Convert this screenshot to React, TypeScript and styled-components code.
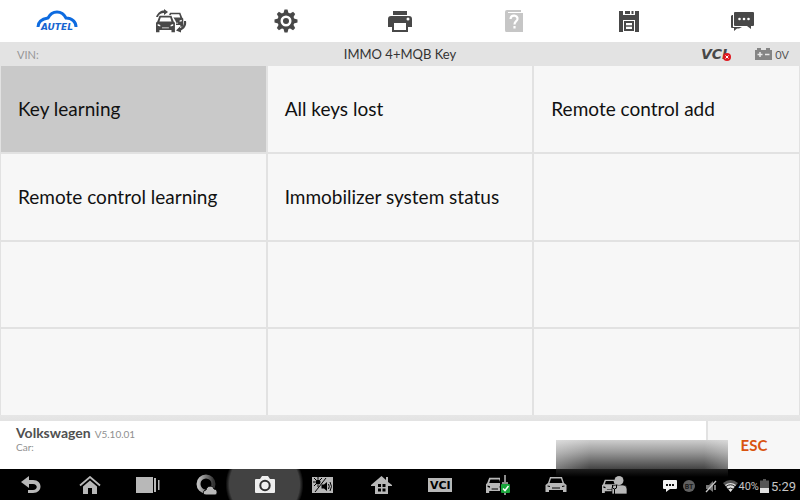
import React from 'react';
import styled, { createGlobalStyle } from 'styled-components';

const GlobalStyle = createGlobalStyle`
  * { box-sizing: border-box; }
  body { margin: 0; background: #fff; font-family: Lato, sans-serif; }
  button { font: inherit; color: inherit; border: 0; padding: 0; background: none; cursor: pointer; }
  svg { display: block; flex: none; }
`;

const Page = styled.div`
  display: flex;
  flex-direction: column;
  min-height: 100vh;
`;

const Toolbar = styled.nav`
  display: grid;
  grid-template-columns: repeat(7, 1fr);
  height: 42px;
  background: #fff;
`;

const ToolButton = styled.button<{ $muted?: boolean }>`
  display: flex;
  align-items: center;
  justify-content: center;
  color: ${(p) => (p.$muted ? '#c6c6c6' : '#484848')};
`;

const InfoBar = styled.header`
  display: grid;
  grid-template-columns: 1fr auto 1fr;
  align-items: center;
  height: 24px;
  padding: 0 11px;
  background: #e3e3e3;
`;

const Vin = styled.span`
  padding-left: 6px;
  font-size: 11px;
  color: #969696;
`;

const Title = styled.h1`
  margin: 0;
  font-size: 13px;
  line-height: 24px;
  font-weight: 400;
  color: #333;
`;

const InfoStatus = styled.div`
  display: flex;
  align-items: center;
  justify-content: flex-end;
  gap: 3px;
  font-size: 11px;
  color: #555;
`;

const VciStatus = styled.span`
  display: flex;
  margin-right: 20px;
`;

const MenuGrid = styled.main`
  flex: 1;
  display: grid;
  grid-template-columns: repeat(3, 1fr);
  grid-template-rows: repeat(4, minmax(64px, 1fr));
  gap: 2px;
  padding: 0 1px;
  background: #e2e2e2;
`;

const MenuButton = styled.button<{ $selected?: boolean }>`
  padding: 0 17px;
  text-align: left;
  font-size: 19px;
  line-height: 24px;
  color: #111;
  background: ${(p) => (p.$selected ? '#c9c9c9' : '#f7f7f7')};
`;

const EmptyCell = styled.div`
  background: #f7f7f7;
`;

const Footer = styled.footer`
  position: relative;
  z-index: 1;
  display: flex;
  justify-content: space-between;
  height: 54px;
  border-style: solid;
  border-width: 6px 0 0;
  border-image: linear-gradient(#e6e6e6, #c8c8c8) 6;
  background: #fff;
`;

const Vehicle = styled.div`
  padding: 4px 16px;
  font-size: 10px;
  line-height: 10px;
  color: #8f8f8f;
`;

const VehicleLine = styled.div`
  display: flex;
  align-items: baseline;
  gap: 4px;
  line-height: 15px;
`;

const Make = styled.strong`
  font-size: 14px;
  color: #505050;
`;

const EscButton = styled.button`
  width: 94px;
  border-left: 2px solid #e2e2e2;
  background: #f7f7f7;
  font-size: 15px;
  font-weight: 700;
  color: #d9540f;
`;

const Shade = styled.div`
  position: absolute;
  right: 9%;
  bottom: -8px;
  width: 172px;
  height: 37px;
  pointer-events: none;
  background:
    linear-gradient(90deg, rgba(255, 255, 255, 0.3), transparent 20%, transparent 86%, rgba(255, 255, 255, 0.25)) top / 100% 29px no-repeat,
    linear-gradient(#cecece, #9a9a9a 12px, #444 29px, rgba(34, 34, 34, 0.9) 29px, transparent);
`;

const SystemBar = styled.nav`
  display: flex;
  height: 31px;
  padding: 0 4px 0 2px;
  background: #000;
  color: #b8b8b8;
`;

const SystemApps = styled.div`
  flex: 1;
  display: grid;
  grid-template-columns: repeat(11, 1fr);
`;

const AppButton = styled.button<{ $active?: boolean }>`
  display: flex;
  align-items: center;
  justify-content: center;
  margin: ${(p) => (p.$active ? '0 -9px' : '0')};
  color: ${(p) => (p.$active ? '#eeeeee' : 'inherit')};
  background: ${(p) => (p.$active ? 'radial-gradient(circle, #424242 35px, transparent 39px)' : 'none')};
`;

const Tray = styled.div`
  display: flex;
  align-items: center;
  justify-content: flex-end;
  width: 152px;
  padding-top: 3px;
  font-family: Roboto, sans-serif;
  font-size: 11px;
  color: #c5c5c5;
`;

const TrayIcon = styled.span<{ $gap?: number }>`
  margin-right: ${(p) => p.$gap ?? 0}px;
`;

const Clock = styled.time`
  margin-left: 2px;
  font-size: 13px;
`;

type IconProps = { w: number; h: number; children: React.ReactNode };
const Icon = ({ w, h, children }: IconProps) => (
  <svg width={w} height={h} viewBox={`0 0 ${w} ${h}`} fill="currentColor" aria-hidden="true">
    {children}
  </svg>
);

const carPath =
  'M4 1H18L20.5 7.5L22 9V20H18V17.5H4V20H0V9L1.5 7.5ZM5.5 3L4 7.5H18L16.5 3ZM2 10.5V12.5L5 13.3V11.5ZM20 10.5V12.5L17 13.3V11.5ZM7 14.5V15.5H15V14.5Z';

const AutelLogo = () => (
  <Icon w={44} h={24}>
    <path
      d="M3 18C3 13 7 10 13 9C17 1 27 1 31 9C37 9 41 13 41 18"
      fill="none" stroke="#0d6be0" strokeWidth="3"
    />
    <text x="6" y="21" fontFamily="DejaVu Sans" fontWeight="700" fontStyle="oblique" fontSize="9" fill="#1765d0">AUTEL</text>
  </Icon>
);

const VehicleSwapIcon = () => (
  <Icon w={32} h={24}>
    <g transform="translate(12 3) scale(.74)"><path fillRule="evenodd" d={carPath} /></g>
    <path d="M1 9L4 6H17L20 11L21 13V23H1Z" fill="#fff" />
    <g transform="translate(1 6) scale(.86)"><path fillRule="evenodd" d={carPath} /></g>
    <path d="M1 8C3 3 6 1.5 9 1.5V0L13 3L9 6V4C6 4 4 5 3 8ZM29 12H31C32 17 29 20 26 21.5V23.5L21 21.5L25 17.5V19C28 18 29 16 29 12Z" />
  </Icon>
);

const GearIcon = () => (
  <Icon w={24} h={24}>
    {[0, 45, 90, 135, 180, 225, 270, 315].map((a) => (
      <path key={a} d="M9 6L10.5 0.5H13.5L15 6Z" transform={`rotate(${a} 12 12)`} />
    ))}
    <circle cx="12" cy="12" r="7" fill="none" stroke="currentColor" strokeWidth="3" />
    <circle cx="12" cy="12" r="3" />
  </Icon>
);

const PrinterIcon = () => (
  <Icon w={24} h={22}>
    <path d="M5 1H19V5H5ZM3 6H21Q24 6 24 9V17H19V11H5V17H0V9Q0 6 3 6Z" />
    <path d="M4 11H20V22H4ZM6 13V20H18V13Z" fillRule="evenodd" />
    <circle cx="20" cy="9" r="1.5" fill="#fff" />
  </Icon>
);

const HelpIcon = () => (
  <Icon w={18} h={22}>
    <path d="M2 0H16V2H3V3H18V22H1Q0 22 0 20V2Q0 0 2 0Z" />
    <path d="M5.5 9C6 4 13 5 12.5 9C12.3 11.5 9.5 11 9.5 14.5M9.5 16V18.5" fill="none" stroke="#fff" strokeWidth="2.2" />
  </Icon>
);

const SaveIcon = () => (
  <Icon w={20} h={21}>
    <path d="M0 0H4V4H16V0H20V21H16V9H4V21H0Z" />
    <path d="M6 0H11V3H6ZM12.5 0H14.5V3H12.5Z" />
    <path fillRule="evenodd" d="M5 10H15V20H5ZM7 12V18H13V12Z" />
    <path d="M7 14.3H13V15.7H7Z" />
  </Icon>
);

const MessageIcon = () => (
  <Icon w={23} h={20}>
    <path d="M4 1H22Q23 1 23 2V14Q23 15 22 15H20V18L16 15H4Q3 15 3 14V2Q3 1 4 1Z" />
    <path d="M1 4H2V16H11L8 17.5H6L3 20V17H1Q0 17 0 16V5Z" />
    <circle cx="8.5" cy="8" r="1.3" fill="#fff" />
    <circle cx="13" cy="8" r="1.3" fill="#fff" />
    <circle cx="17.5" cy="8" r="1.3" fill="#fff" />
  </Icon>
);

const VciIcon = () => (
  <Icon w={32} h={22}>
    <text x="1" y="16" fontFamily="DejaVu Sans" fontWeight="700" fontStyle="oblique" fontSize="14" fill="#484848">VCI</text>
    <circle cx="27" cy="14" r="4" fill="#df1820" />
    <path d="M25.5 12.5L28.5 15.5M28.5 12.5L25.5 15.5" stroke="#fff" />
  </Icon>
);

const CarBatteryIcon = () => (
  <Icon w={17} h={12}>
    <path d="M2 0H6V2H11V0H15V2H17V12H0V2H2Z" fill="#858585" />
    <path d="M2.5 6.5H7.5M5 4V9M10 6.5H14.5" stroke="#e8e8e8" strokeWidth="1.5" />
  </Icon>
);

const BackIcon = () => (
  <Icon w={20} h={18}>
    <path d="M8 0V4H12C22 4 22 17 12 17H7V14H12C17 14 17 8 12 8H8V12L0 6Z" />
  </Icon>
);

const HomeIcon = () => (
  <Icon w={22} h={18}>
    <path d="M1 9.5L11 1L21 9.5" fill="none" stroke="currentColor" strokeWidth="1.8" />
    <path d="M4 10.5L11 4.5L18 10.5V18H13V12H9V18H4Z" />
  </Icon>
);

const RecentIcon = () => (
  <Icon w={24} h={16}>
    <path d="M0 0H17V16H0ZM18 1H20V15H18ZM22 3H23.5V13H22Z" />
  </Icon>
);

const BrowserIcon = () => (
  <Icon w={23} h={21}>
    <defs>
      <linearGradient id="ring"><stop stopColor="#c0c0c0" /><stop offset="1" stopColor="#333" /></linearGradient>
    </defs>
    <circle cx="11" cy="10" r="7.5" fill="none" stroke="url(#ring)" strokeWidth="4" />
    <path d="M11 21C7 21 8 16 11 16C12 11 18 11 19 15C23 15 23 21 20 21Z" stroke="#000" />
  </Icon>
);

const CameraIcon = () => (
  <Icon w={20} h={17}>
    <path d="M1 3H5L7 0H13L15 3H19Q20 3 20 4V16Q20 17 19 17H1Q0 17 0 16V4Q0 3 1 3Z" />
    <circle cx="10" cy="9.5" r="4.7" fill="none" stroke="#303030" strokeWidth="2" />
  </Icon>
);

const DisplaySoundIcon = () => (
  <Icon w={21} h={16}>
    <path d="M0 0H21V16H0Z" />
    <circle cx="6" cy="5" r="2.5" fill="#000" />
    <path d="M6 0V2M1 5H3M2 1L4 3M10 1L8 3M2 9L4 7M6 8V10M14 1L3 15" stroke="#000" />
    <path d="M9.5 7.5H12L15 5V14L12 11.5H9.5Z" fill="#000" />
    <path d="M16.5 7Q18 9.5 16.5 12M18 5Q21 9.5 18 14" fill="none" stroke="#000" />
  </Icon>
);

const HouseIcon = () => (
  <Icon w={21} h={18}>
    <path d="M0 9L10.5 0L15 4V1H17V6L21 9V10H17V18H4V10H0Z" />
    <path d="M7 8H10V11H7ZM11.5 8H14.5V11H11.5ZM7 12.5H10V15.5H7ZM11.5 12.5H14.5V15.5H11.5Z" fill="#000" />
  </Icon>
);

const VciBoxIcon = () => (
  <Icon w={24} h={14}>
    <path d="M0 0H24V14H0Z" />
    <text x="2" y="11" fontFamily="DejaVu Sans" fontWeight="700" fontSize="11" fill="#000">VCI</text>
  </Icon>
);

const VehicleCheckIcon = () => (
  <Icon w={25} h={20}>
    <g transform="translate(0 2) scale(.8)"><path fillRule="evenodd" d={carPath} /></g>
    <path d="M14 0H21V20H14Z" fill="#000" />
    <path d="M18 0H20V20H18ZM16 7H22V9H16Z" fill="#8c8c8c" />
    <rect x="15" y="9" width="9" height="9" rx="1" fill="#18a43a" />
    <path d="M17 13.5L19 15.5L22.5 11" fill="none" stroke="#fff" strokeWidth="1.5" />
  </Icon>
);

const CarIcon = () => (
  <Icon w={22} h={17}>
    <path fillRule="evenodd" d="M5 1H17L19 7L21.5 9V16H18V14H4V16H0.5V9L3 7ZM6 2.5L4.5 7H17.5L16 2.5ZM2.5 9.5V10.5L5 11V10ZM19.5 9.5V10.5L17 11V10ZM7 11.5V12.5H15V11.5Z" />
  </Icon>
);

const TechnicianIcon = () => (
  <Icon w={25} h={18}>
    <g transform="translate(0 3) scale(.7)"><path fillRule="evenodd" d={carPath} /></g>
    <path d="M10 18V12Q10 9 14 9H21Q25 9 25 13V18Z" stroke="#000" strokeWidth=".7" />
    <circle cx="17" cy="4.5" r="4.5" />
    <path d="M10.5 9V12L12.5 13L14.5 12V9M12.5 13V18" fill="none" stroke="#000" strokeWidth="1" />
  </Icon>
);

const TrayMessageIcon = () => (
  <Icon w={14} h={12}>
    <path d="M1 0H13Q14 0 14 1V8Q14 9 13 9H7L3 12V9H1Q0 9 0 8V1Q0 0 1 0Z" fill="#f2f2f2" />
    <path d="M3 4H5V6H3ZM6 4H8V6H6ZM9 4H11V6H9Z" fill="#111" />
  </Icon>
);

const BluetoothIcon = () => (
  <Icon w={12} h={12}>
    <circle cx="6" cy="6" r="6" fill="#606060" />
    <text x="6" y="9" textAnchor="middle" fontFamily="Roboto" fontWeight="700" fontSize="7" fill="#1b1b1b">BT</text>
  </Icon>
);

const MutedIcon = () => (
  <Icon w={12} h={13}>
    <path d="M1 5H4L8 1V12L4 9H1Z" fill="#777" />
    <path d="M1 12L11 1M10 5V10" stroke="#c5c5c5" strokeWidth="1.3" />
  </Icon>
);

const WifiIcon = () => (
  <Icon w={15} h={12}>
    <path d="M0 3Q7.5-3 15 3L7.5 12Z" fill="#555" />
    <path d="M2 5Q7.5 1 13 5L7.5 12Z" fill="#e0e0e0" />
    <path d="M3 6.5Q7.5 3 12 6.5M5 9Q7.5 7 10 9" fill="none" stroke="#222" />
  </Icon>
);

const BatteryIcon = () => (
  <Icon w={9} h={14}>
    <path d="M3 0H6V1.5H9V14H0V1.5H3Z" fill="#555" />
    <path d="M0 9H9V14H0Z" fill="#dedede" />
  </Icon>
);

const tools = [
  { label: 'Autel home', icon: <AutelLogo /> },
  { label: 'Switch vehicle', icon: <VehicleSwapIcon /> },
  { label: 'Settings', icon: <GearIcon /> },
  { label: 'Print', icon: <PrinterIcon /> },
  { label: 'Help', icon: <HelpIcon />, muted: true },
  { label: 'Save', icon: <SaveIcon /> },
  { label: 'Messages', icon: <MessageIcon /> },
];

const functions = [
  'Key learning', 'All keys lost', 'Remote control add',
  'Remote control learning', 'Immobilizer system status', '',
  '', '', '', '', '', '',
];

const apps = [
  { label: 'Back', icon: <BackIcon /> },
  { label: 'Home', icon: <HomeIcon /> },
  { label: 'Recent apps', icon: <RecentIcon /> },
  { label: 'Browser', icon: <BrowserIcon /> },
  { label: 'Camera', icon: <CameraIcon />, active: true },
  { label: 'Display and sound', icon: <DisplaySoundIcon /> },
  { label: 'MaxiSys home', icon: <HouseIcon /> },
  { label: 'VCI', icon: <VciBoxIcon /> },
  { label: 'Diagnostics', icon: <VehicleCheckIcon /> },
  { label: 'Vehicle', icon: <CarIcon /> },
  { label: 'Service', icon: <TechnicianIcon /> },
];

export default function App() {
  return (
    <Page>
      <GlobalStyle />
      <Toolbar>
        {tools.map((t) => (
          <ToolButton key={t.label} aria-label={t.label} $muted={t.muted} disabled={t.muted}>
            {t.icon}
          </ToolButton>
        ))}
      </Toolbar>
      <InfoBar>
        <Vin>VIN:</Vin>
        <Title>IMMO 4+MQB Key</Title>
        <InfoStatus>
          <VciStatus><VciIcon /></VciStatus>
          <CarBatteryIcon />
          <span>0V</span>
        </InfoStatus>
      </InfoBar>
      <MenuGrid>
        {functions.map((name, i) =>
          name ? (
            <MenuButton key={i} $selected={i === 0}>{name}</MenuButton>
          ) : (
            <EmptyCell key={i} />
          ),
        )}
      </MenuGrid>
      <Footer>
        <Vehicle>
          <VehicleLine>
            <Make>Volkswagen</Make>
            <span>V5.10.01</span>
          </VehicleLine>
          <div>Car:</div>
        </Vehicle>
        <EscButton>ESC</EscButton>
        <Shade />
      </Footer>
      <SystemBar>
        <SystemApps>
          {apps.map((a) => (
            <AppButton key={a.label} aria-label={a.label} $active={a.active}>{a.icon}</AppButton>
          ))}
        </SystemApps>
        <Tray>
          <TrayIcon $gap={6}><TrayMessageIcon /></TrayIcon>
          <TrayIcon $gap={10}><BluetoothIcon /></TrayIcon>
          <TrayIcon $gap={6}><MutedIcon /></TrayIcon>
          <TrayIcon $gap={1}><WifiIcon /></TrayIcon>
          <TrayIcon $gap={1}>40%</TrayIcon>
          <BatteryIcon />
          <Clock>5:29</Clock>
        </Tray>
      </SystemBar>
    </Page>
  );
}
